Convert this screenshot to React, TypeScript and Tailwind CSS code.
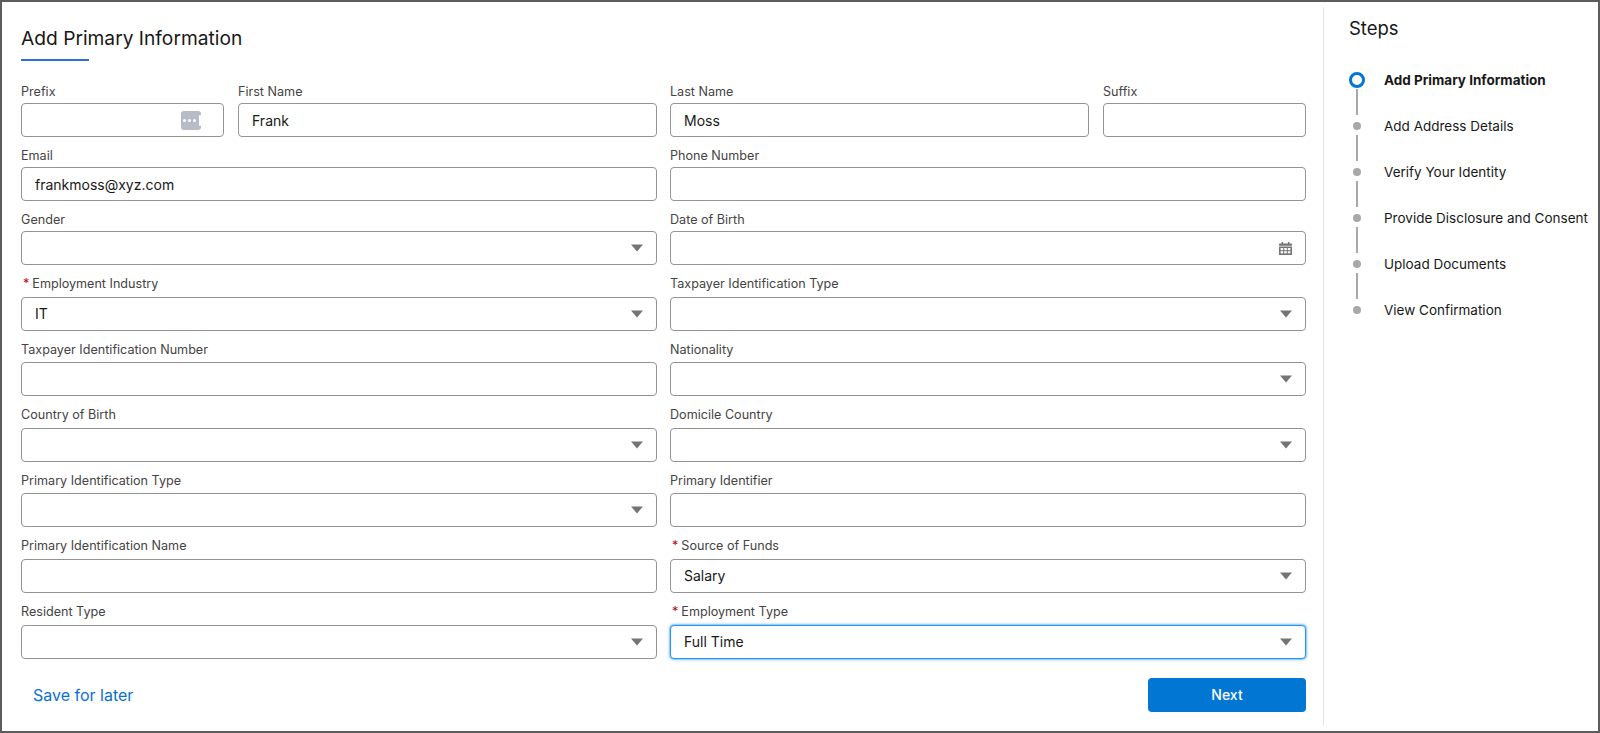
import React from "react";

type Kind = "text" | "select" | "date" | "lookup";

type FieldProps = {
  label: string;
  value?: string;
  kind?: Kind;
  required?: boolean;
  focused?: boolean;
  tall?: boolean;
};

function Caret() {
  return (
    <svg width="12" height="8" viewBox="0 0 12 8" className="shrink-0">
      <polygon points="0,0.5 12,0.5 6,7.5" fill="#747474" />
    </svg>
  );
}

function CalendarIcon() {
  return (
    <svg width="13" height="13" viewBox="0 0 13 13" className="shrink-0">
      <rect x="2.5" y="0" width="1.6" height="2.6" fill="#747474" />
      <rect x="8.9" y="0" width="1.6" height="2.6" fill="#747474" />
      <rect x="0" y="1.6" width="13" height="2.2" rx="0.6" fill="#747474" />
      <rect x="0" y="4.6" width="13" height="8.4" rx="0.6" fill="#747474" />
      <rect x="1.6" y="6" width="2.6" height="2.2" fill="#fff" />
      <rect x="5.2" y="6" width="2.6" height="2.2" fill="#fff" />
      <rect x="8.8" y="6" width="2.6" height="2.2" fill="#fff" />
      <rect x="1.6" y="9.2" width="2.6" height="2.2" fill="#fff" />
      <rect x="5.2" y="9.2" width="2.6" height="2.2" fill="#fff" />
      <rect x="8.8" y="9.2" width="2.6" height="2.2" fill="#fff" />
    </svg>
  );
}

function LookupIcon() {
  return (
    <div className="flex h-[19px] w-[20px] shrink-0 items-center justify-center gap-[2px] rounded-[3px] bg-[#b8bcc6] pl-[2px]">
      <span className="h-[3px] w-[3px] rounded-full bg-white" />
      <span className="h-[3px] w-[3px] rounded-full bg-white" />
      <span className="h-[3px] w-[3px] rounded-full bg-white" />
      <span className="ml-[1px] h-[11px] w-[2px] rounded-[1px] bg-white" />
    </div>
  );
}

function Field({ label, value = "", kind = "text", required, focused, tall }: FieldProps) {
  return (
    <div className="flex flex-col">
      <div className={`${tall ? "h-[22.6px]" : "h-[21px]"} flex text-[12.6px] leading-5 text-[#444444]`}>
        {required && <span className="ml-[2px] mr-[3px] text-[#ba0517]">*</span>}
        <span>{label}</span>
      </div>
      <div
        className={`flex h-[34px] items-center justify-between rounded-[4px] border bg-white pl-[13px] text-[14px] text-[#181818] ${
          focused
            ? "border-[#1b96ff] shadow-[0_0_3px_#0176d3]"
            : "border-[#939393]"
        } ${kind === "lookup" ? "pr-[22px]" : "pr-[13px]"}`}
      >
        <span>{value}</span>
        {kind === "select" && <Caret />}
        {kind === "date" && <CalendarIcon />}
        {kind === "lookup" && <LookupIcon />}
      </div>
    </div>
  );
}

const rows: [FieldProps, FieldProps][] = [
  [
    { label: "Email", value: "frankmoss@xyz.com" },
    { label: "Phone Number" }
  ],
  [
    { label: "Gender", kind: "select" },
    { label: "Date of Birth", kind: "date" }
  ],
  [
    { label: "Employment Industry", kind: "select", value: "IT", required: true, tall: true },
    { label: "Taxpayer Identification Type", kind: "select", tall: true }
  ],
  [
    { label: "Taxpayer Identification Number", tall: true },
    { label: "Nationality", kind: "select", tall: true }
  ],
  [
    { label: "Country of Birth", kind: "select", tall: true },
    { label: "Domicile Country", kind: "select", tall: true }
  ],
  [
    { label: "Primary Identification Type", kind: "select", tall: true },
    { label: "Primary Identifier", tall: true }
  ],
  [
    { label: "Primary Identification Name", tall: true },
    { label: "Source of Funds", kind: "select", value: "Salary", required: true, tall: true }
  ],
  [
    { label: "Resident Type", kind: "select", tall: true },
    { label: "Employment Type", kind: "select", value: "Full Time", required: true, focused: true, tall: true }
  ]
];

const steps = [
  "Add Primary Information",
  "Add Address Details",
  "Verify Your Identity",
  "Provide Disclosure and Consent",
  "Upload Documents",
  "View Confirmation"
];

function Steps() {
  return (
    <div className="flex-1 pl-[25px] pt-[14px]">
      <h2 className="text-[18.5px] leading-6 text-[#181818]">Steps</h2>
      <div className="mt-[32px] flex flex-col">
        {steps.map((step, i) => (
          <div key={step} className="flex flex-col">
            {i > 0 && (
              <div className="flex h-[30px] w-4 justify-center pb-[3px] pt-[1px]">
                <div className="w-[2px] bg-[#a8a8a8]" />
              </div>
            )}
            <div className="flex h-4 items-center">
              <div className="flex w-4 justify-center">
                {i === 0 ? (
                  <span className="h-4 w-4 rounded-full border-[3px] border-[#0176d3] bg-white" />
                ) : (
                  <span className="h-2 w-2 rounded-full bg-[#a8a8a8]" />
                )}
              </div>
              <span
                className={`ml-[19px] whitespace-nowrap text-[13.5px] text-[#181818] ${
                  i === 0 ? "font-bold" : ""
                }`}
              >
                {step}
              </span>
            </div>
          </div>
        ))}
      </div>
    </div>
  );
}

export default function App() {
  return (
    <div
      className="flex h-[733px] w-[1600px] border-2 border-[#5c5c5c] bg-white"
      style={{ fontFamily: "Inter, 'Noto Sans', Arial, sans-serif" }}
    >
      <div className="ml-[19px] flex w-[1285px] flex-col pt-[22px]">
        <h1 className="text-[19.2px] leading-7 text-[#181818]">Add Primary Information</h1>
        <div className="mt-[7px] h-[2px] w-[68px] bg-[#2e6fcf]" />

        <div className="mt-[21px] flex flex-col gap-[9px]">
          <div className="grid grid-cols-2 gap-x-[13px]">
            <div className="grid grid-cols-[203px_1fr] gap-x-[14px]">
              <Field label="Prefix" kind="lookup" />
              <Field label="First Name" value="Frank" />
            </div>
            <div className="grid grid-cols-[1fr_203px] gap-x-[14px]">
              <Field label="Last Name" value="Moss" />
              <Field label="Suffix" />
            </div>
          </div>
          {rows.map(([left, right]) => (
            <div key={left.label} className="grid grid-cols-2 gap-x-[13px]">
              <Field {...left} />
              <Field {...right} />
            </div>
          ))}
        </div>

        <div className="mt-[19px] flex items-center justify-between">
          <button className="pl-[12px] text-[16px] text-[#0b6fd0]">Save for later</button>
          <button className="h-[34px] w-[158px] rounded-[4px] bg-[#0176d3] text-[14px] font-medium text-white">
            Next
          </button>
        </div>
      </div>

      <div className="my-[5px] ml-[17px] w-px bg-[#e5e5e5]" />

      <Steps />
    </div>
  );
}
